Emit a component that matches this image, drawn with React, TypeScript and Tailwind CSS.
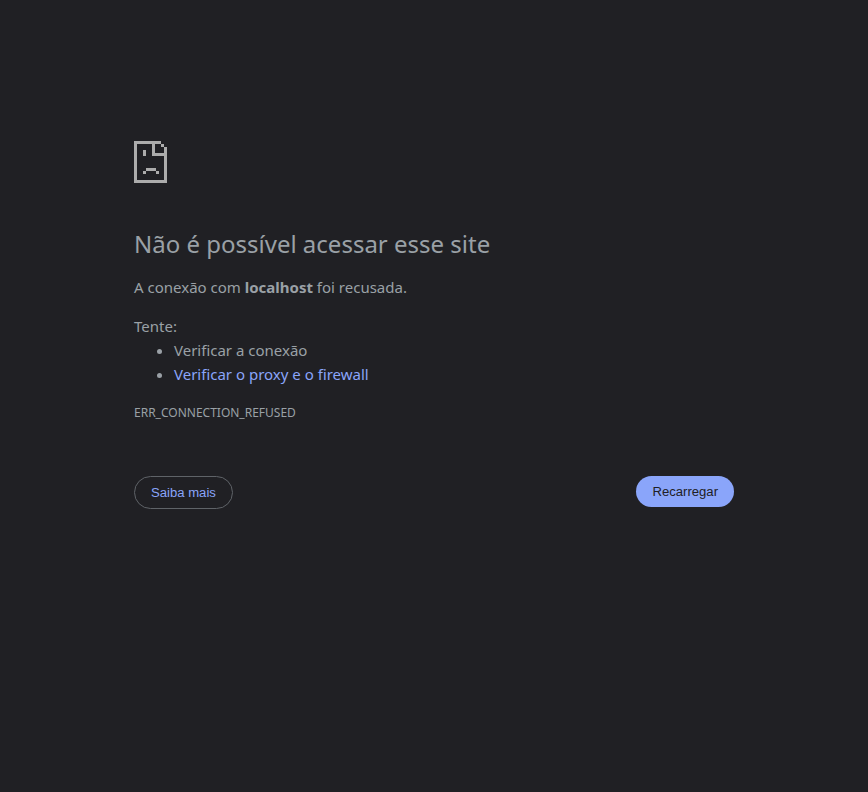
export default function App() {
  return (
    <main className="min-h-screen bg-[#202024] text-[#9aa0a6] font-['Noto_Sans',sans-serif] text-[15px] leading-6">
      <div className="mx-auto w-[600px] pt-[141px]">
        <svg width="33" height="42" viewBox="0 0 33 42" shapeRendering="crispEdges" fill="#acacac">
          <path d="M0 0h27v3H3v36h27V15H18V3h3v9h9V6h3v36H0zM27 3h3v3h-3zM9 9h3v6H9zM12 27h10v3H12zM9 30h3v3H9zM22 30h3v3h-3z" />
        </svg>
        <h1 className="mt-[46px] text-[24px] leading-[30px] font-normal">Não é possível acessar esse site</h1>
        <p className="mt-[16px]">A conexão com <strong className="font-bold">localhost</strong> foi recusada.</p>
        <div className="mt-[15px]">
          <p>Tente:</p>
          <ul className="list-disc pl-10">
            <li>Verificar a conexão</li>
            <li><a className="text-[#8aa5fa]">Verificar o proxy e o firewall</a></li>
          </ul>
        </div>
        <div className="mt-[15px] text-[12px] leading-6">ERR_CONNECTION_REFUSED</div>
        <div className="mt-[51px] flex items-start justify-between font-['Liberation_Sans',sans-serif] text-[13.125px] leading-[15px]">
          <button className="rounded-[20px] border border-[#5f6368] px-4 py-2 text-[#8aa5fa]">Saiba mais</button>
          <button className="rounded-[20px] bg-[#8aa5fa] px-4 py-2 text-[#202024]">Recarregar</button>
        </div>
      </div>
    </main>
  );
}
